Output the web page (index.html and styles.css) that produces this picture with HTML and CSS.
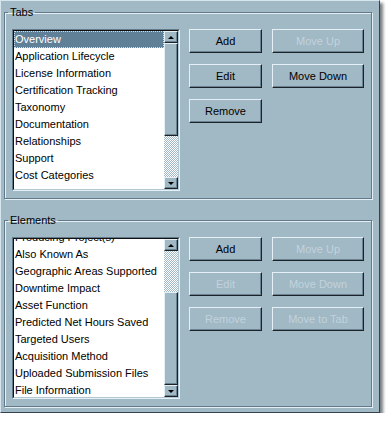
FILE: index.html
```html
<!DOCTYPE html>
<html lang="en">
<head>
    <meta charset="UTF-8">
    <title>Tab Layout</title>
    <link rel="stylesheet" href="styles.css">
</head>
<body>
    <div class="window">
        <!-- Tabs group -->
        <fieldset class="group">
            <legend>Tabs</legend>
            <div class="group-body">
                <div class="listbox">
                    <div class="listbox-inner">
                        <ul class="items">
                            <li class="selected">Overview</li>
                            <li>Application Lifecycle</li>
                            <li>License Information</li>
                            <li>Certification Tracking</li>
                            <li>Taxonomy</li>
                            <li>Documentation</li>
                            <li>Relationships</li>
                            <li>Support</li>
                            <li>Cost Categories</li>
                        </ul>
                        <div class="scrollbar">
                            <div class="sb-btn"><span class="arrow-up"></span></div>
                            <div class="sb-track">
                                <div class="sb-thumb"></div>
                            </div>
                            <div class="sb-btn"><span class="arrow-down"></span></div>
                        </div>
                    </div>
                </div>
                <div class="buttons">
                    <button class="btn">Add</button>
                    <button class="btn" disabled>Move Up</button>
                    <button class="btn">Edit</button>
                    <button class="btn">Move Down</button>
                    <button class="btn">Remove</button>
                </div>
            </div>
        </fieldset>

        <!-- Elements group -->
        <fieldset class="group elements">
            <legend>Elements</legend>
            <div class="group-body">
                <div class="listbox">
                    <div class="listbox-inner">
                        <ul class="items scrolled">
                            <li>Producing Project(s)</li>
                            <li>Also Known As</li>
                            <li>Geographic Areas Supported</li>
                            <li>Downtime Impact</li>
                            <li>Asset Function</li>
                            <li>Predicted Net Hours Saved</li>
                            <li>Targeted Users</li>
                            <li>Acquisition Method</li>
                            <li>Uploaded Submission Files</li>
                            <li>File Information</li>
                        </ul>
                        <div class="scrollbar">
                            <div class="sb-btn"><span class="arrow-up"></span></div>
                            <div class="sb-track at-end">
                                <div class="sb-thumb"></div>
                            </div>
                            <div class="sb-btn"><span class="arrow-down"></span></div>
                        </div>
                    </div>
                </div>
                <div class="buttons">
                    <button class="btn">Add</button>
                    <button class="btn" disabled>Move Up</button>
                    <button class="btn" disabled>Edit</button>
                    <button class="btn" disabled>Move Down</button>
                    <button class="btn" disabled>Remove</button>
                    <button class="btn" disabled>Move to Tab</button>
                </div>
            </div>
        </fieldset>
    </div>
</body>
</html>
```
FILE: styles.css
```css
body {
    margin: 0;
    background: #ffffff;
    font-family: 'Liberation Sans', Arial, sans-serif;
    font-size: 11px;
    color: #000;
}
.window {
    box-sizing: border-box;
    width: 380px;
    height: 413px;
    padding: 6px 0 0 3px;
    background: #a1b8c5;
    border-left: 1px solid #d6e5ee;
    border-top: 1px solid #d6e5ee;
    border-right: 1px solid #34434d;
    border-bottom: 1px solid #34434d;
    box-shadow: 3px 3px 3px rgba(30, 38, 44, 0.6);
}
.window > .group:first-child {
    margin-top: -1px;
}
.group {
    box-sizing: border-box;
    width: 368px;
    margin: 0;
    padding: 10px 0 7px 7px;
    border: 1px solid #62798a;
    box-shadow: 1px 1px 0 #e4f0f6, inset 1px 1px 0 #e4f0f6;
}
.group legend {
    margin-left: -4px;
    padding: 0 2px;
    line-height: 13px;
}
.group.elements {
    margin-top: 15px;
}
.group-body {
    display: flex;
    gap: 9px;
    align-items: flex-start;
}

/* list box */
.listbox {
    width: 168px;
    height: 162px;
    box-sizing: border-box;
    border: 1px solid;
    border-color: #62798a #e4f0f6 #e4f0f6 #62798a;
}
.listbox-inner {
    height: 100%;
    box-sizing: border-box;
    display: flex;
    border: 1px solid;
    border-color: #111 #b3c7d2 #b3c7d2 #111;
}
.items {
    flex: 1;
    margin: 0;
    padding: 0;
    list-style: none;
    background: #fff;
    overflow: hidden;
}
.items li {
    height: 17px;
    line-height: 17px;
    padding-left: 1px;
    white-space: nowrap;
}
.items.scrolled li:first-child {
    margin-top: -10px;
}
.items li.selected {
    background: #5f8096;
    color: #fff;
    outline: 1px dotted #d4e0e7;
    outline-offset: -1px;
}

/* scrollbar */
.scrollbar {
    width: 14px;
    display: flex;
    flex-direction: column;
}
.sb-btn, .sb-thumb {
    box-sizing: border-box;
    background: #a1b8c5;
    border: 1px solid;
    border-color: #e4f0f6 #1c2328 #1c2328 #e4f0f6;
    box-shadow: inset -1px -1px 0 #6a8292;
}
.sb-btn {
    height: 12px;
    display: flex;
    align-items: center;
    justify-content: center;
}
.arrow-up, .arrow-down {
    width: 0;
    height: 0;
    border-left: 3px solid transparent;
    border-right: 3px solid transparent;
}
.arrow-up {
    border-bottom: 3px solid #000;
}
.arrow-down {
    border-top: 3px solid #000;
}
.sb-track {
    flex: 1;
    display: flex;
    flex-direction: column;
    background: repeating-conic-gradient(#ffffff 0 25%, #a1b8c5 0 50%) 0 0 / 2px 2px;
}
.sb-track.at-end {
    justify-content: flex-end;
}
.sb-thumb {
    height: 93px;
}

/* push buttons */
.buttons {
    display: grid;
    grid-template-columns: 73px 92px;
    grid-auto-rows: 24px;
    column-gap: 10px;
    row-gap: 11px;
}
.btn {
    margin: 0;
    padding: 0;
    font-family: inherit;
    font-size: 11px;
    color: #000;
    background: #a1b8c5;
    border: 1px solid;
    border-color: #e4f0f6 #1c2328 #1c2328 #e4f0f6;
    box-shadow: inset -1px -1px 0 #6a8292;
}
.btn:disabled {
    color: #c2d3dc;
}
```
